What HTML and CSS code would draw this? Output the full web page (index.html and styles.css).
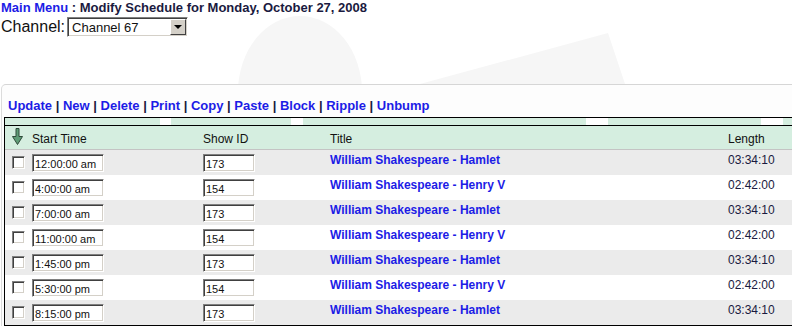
FILE: index.html
```html
<!DOCTYPE html>
<html lang="en">
<head>
    <meta charset="UTF-8">
    <meta name="viewport" content="width=device-width, initial-scale=1.0">
    <title>Modify Schedule</title>
    <link rel="stylesheet" href="styles.css">
</head>
<body>
    <div class="top">
        <svg class="watermark" width="792" height="84" viewBox="0 0 792 84">
            <ellipse cx="300" cy="92" rx="62" ry="76" fill="#f6f6f6"/>
            <polygon points="420,84 608,33 625,84" fill="#f6f6f6"/>
        </svg>
        <h1 class="page-title"><a href="#" class="main-link">Main Menu</a> : Modify Schedule for Monday, October 27, 2008</h1>
        <div class="channel-row">
            <span class="channel-label">Channel:</span>
            <span class="select">
                <span class="select-text">Channel 67</span>
                <span class="select-btn"><span class="select-arrow"></span></span>
            </span>
        </div>
    </div>

    <div class="panel">
        <div class="toolbar">
            <a href="#">Update</a> | <a href="#">New</a> | <a href="#">Delete</a> | <a href="#">Print</a> | <a href="#">Copy</a> | <a href="#">Paste</a> | <a href="#">Block</a> | <a href="#">Ripple</a> | <a href="#">Unbump</a>
        </div>

        <div class="grid">
            <div class="band">
                <span class="seg seg1"></span>
                <span class="seg seg2"></span>
                <span class="seg seg3"></span>
                <span class="seg seg4"></span>
                <span class="seg seg5"></span>
            </div>
            <table class="schedule">
                <thead>
                    <tr>
                        <th class="col-check">
                            <svg class="sort-icon" width="11" height="17" viewBox="0 0 11 17">
                                <path d="M4 0.5 H7 V8.5 H10.5 L5.5 16.5 L0.5 8.5 H4 Z" fill="#5f9c77" stroke="#2f4a3a" stroke-width="1"/>
                            </svg>
                        </th>
                        <th class="col-time">Start Time</th>
                        <th class="col-id">Show ID</th>
                        <th class="col-title">Title</th>
                        <th class="col-len">Length</th>
                    </tr>
                </thead>
                <tbody>
                    <tr class="alt">
                        <td><input type="checkbox" class="chk"></td>
                        <td><input type="text" class="txt time" value="12:00:00 am"></td>
                        <td><input type="text" class="txt sid" value="173"></td>
                        <td><a href="#" class="show-link">William Shakespeare - Hamlet</a></td>
                        <td>03:34:10</td>
                    </tr>
                    <tr>
                        <td><input type="checkbox" class="chk"></td>
                        <td><input type="text" class="txt time" value="4:00:00 am"></td>
                        <td><input type="text" class="txt sid" value="154"></td>
                        <td><a href="#" class="show-link">William Shakespeare - Henry V</a></td>
                        <td>02:42:00</td>
                    </tr>
                    <tr class="alt">
                        <td><input type="checkbox" class="chk"></td>
                        <td><input type="text" class="txt time" value="7:00:00 am"></td>
                        <td><input type="text" class="txt sid" value="173"></td>
                        <td><a href="#" class="show-link">William Shakespeare - Hamlet</a></td>
                        <td>03:34:10</td>
                    </tr>
                    <tr>
                        <td><input type="checkbox" class="chk"></td>
                        <td><input type="text" class="txt time" value="11:00:00 am"></td>
                        <td><input type="text" class="txt sid" value="154"></td>
                        <td><a href="#" class="show-link">William Shakespeare - Henry V</a></td>
                        <td>02:42:00</td>
                    </tr>
                    <tr class="alt">
                        <td><input type="checkbox" class="chk"></td>
                        <td><input type="text" class="txt time" value="1:45:00 pm"></td>
                        <td><input type="text" class="txt sid" value="173"></td>
                        <td><a href="#" class="show-link">William Shakespeare - Hamlet</a></td>
                        <td>03:34:10</td>
                    </tr>
                    <tr>
                        <td><input type="checkbox" class="chk"></td>
                        <td><input type="text" class="txt time" value="5:30:00 pm"></td>
                        <td><input type="text" class="txt sid" value="154"></td>
                        <td><a href="#" class="show-link">William Shakespeare - Henry V</a></td>
                        <td>02:42:00</td>
                    </tr>
                    <tr class="alt">
                        <td><input type="checkbox" class="chk"></td>
                        <td><input type="text" class="txt time" value="8:15:00 pm"></td>
                        <td><input type="text" class="txt sid" value="173"></td>
                        <td><a href="#" class="show-link">William Shakespeare - Hamlet</a></td>
                        <td>03:34:10</td>
                    </tr>
                </tbody>
            </table>
        </div>
    </div>
</body>
</html>
```

FILE: styles.css
```css
body {
    margin: 0;
    padding: 0 0 0 1px;
    font-family: "Liberation Sans", Arial, sans-serif;
    background-color: #fff;
    overflow: hidden;
}
a {
    text-decoration: none;
}
.top {
    position: relative;
    height: 84px;
}
.watermark {
    position: absolute;
    top: 0;
    left: -1px;
    z-index: -1;
}
.page-title {
    margin: 0;
    font-size: 13px;
    line-height: 16px;
    font-weight: bold;
    color: #1a1a40;
}
.main-link {
    color: #1c1ce6;
}
.channel-row {
    display: flex;
    align-items: center;
    margin-top: 1px;
}
.channel-label {
    font-size: 16px;
    line-height: 20px;
    color: #111;
    margin-right: 2px;
}
.select {
    display: flex;
    align-items: center;
    box-sizing: border-box;
    width: 121px;
    height: 20px;
    border: 1px solid;
    border-color: #808080 #fff #fff #808080;
    box-shadow: inset 1px 1px #404040, inset -1px -1px #d4d0c8;
    background-color: #fff;
}
.select-text {
    flex: 1;
    font-size: 13px;
    color: #111;
    padding-left: 4px;
}
.select-btn {
    display: flex;
    align-items: center;
    justify-content: center;
    box-sizing: border-box;
    width: 16px;
    height: 16px;
    margin-right: 1px;
    background-color: #d4d0c8;
    border: 1px solid;
    border-color: #fff #404040 #404040 #fff;
}
.select-arrow {
    width: 0;
    height: 0;
    border-left: 4px solid transparent;
    border-right: 4px solid transparent;
    border-top: 4px solid #000;
}
.panel {
    border-top: 1px solid #d6d6d6;
    border-left: 1px solid #dcdcdc;
    border-top-left-radius: 5px;
    background-color: #fdfdfd;
}
.toolbar {
    padding: 13px 0 0 6px;
    font-size: 13px;
    line-height: 16px;
    font-weight: bold;
    color: #1a1a40;
}
.toolbar a {
    color: #1c1ce6;
}
.grid {
    margin: 3px 0 0 2px;
    width: 800px;
}
.band {
    display: flex;
    height: 7px;
    border-top: 1px solid #000;
    border-bottom: 1px solid #000;
    border-left: 1px solid #000;
    background-color: #fff;
}
.seg {
    background-color: #d5eee0;
}
.seg1 { width: 155px; }
.seg2 { width: 120px; margin-left: 11px; }
.seg3 { width: 283px; margin-left: 12px; }
.seg4 { width: 153px; margin-left: 22px; }
.seg5 { flex: 1; margin-left: 22px; }
.schedule {
    width: 100%;
    border-collapse: separate;
    border-spacing: 0;
    border-left: 1px solid #000;
    border-bottom: 1px solid #000;
    font-size: 12px;
    line-height: 14px;
    color: #1a1a40;
}
.schedule th {
    padding: 6px 4px 3px;
    text-align: left;
    font-weight: normal;
    color: #111;
    background-color: #d5eee0;
    border-bottom: 1px solid #c4c4c4;
    vertical-align: top;
}
.schedule th.col-check {
    padding: 2px 0 0 7px;
}
.sort-icon {
    display: block;
}
.col-check { width: 16px; }
.col-time { width: 163px; }
.col-id { width: 119px; }
.col-title { width: 390px; }
.schedule tbody tr {
    height: 25px;
}
.schedule tr.alt td {
    background-color: #ebebeb;
}
.schedule td {
    padding: 3px 4px 0;
    vertical-align: top;
    background-color: #fff;
}
.schedule td:first-child {
    padding: 0 0 0 7px;
}
.chk {
    -webkit-appearance: none;
    appearance: none;
    display: block;
    box-sizing: border-box;
    width: 13px;
    height: 13px;
    margin: 6px 0 0;
    border: 1px solid;
    border-color: #808080 #fff #fff #808080;
    box-shadow: inset 1px 1px #404040, inset -1px -1px #d4d0c8;
    background-color: #fff;
}
.txt {
    display: block;
    box-sizing: border-box;
    height: 18px;
    margin: 1px 0 0;
    padding: 1px 0 0 2px;
    font-family: "Liberation Sans", Arial, sans-serif;
    font-size: 11px;
    color: #111;
    border: 1px solid;
    border-color: #808080 #fff #fff #808080;
    box-shadow: inset 1px 1px #404040, inset -1px -1px #d4d0c8;
    background-color: #fff;
    outline: none;
}
.time { width: 72px; }
.sid { width: 52px; }
.show-link {
    font-weight: bold;
    color: #1c1ce6;
}
```
